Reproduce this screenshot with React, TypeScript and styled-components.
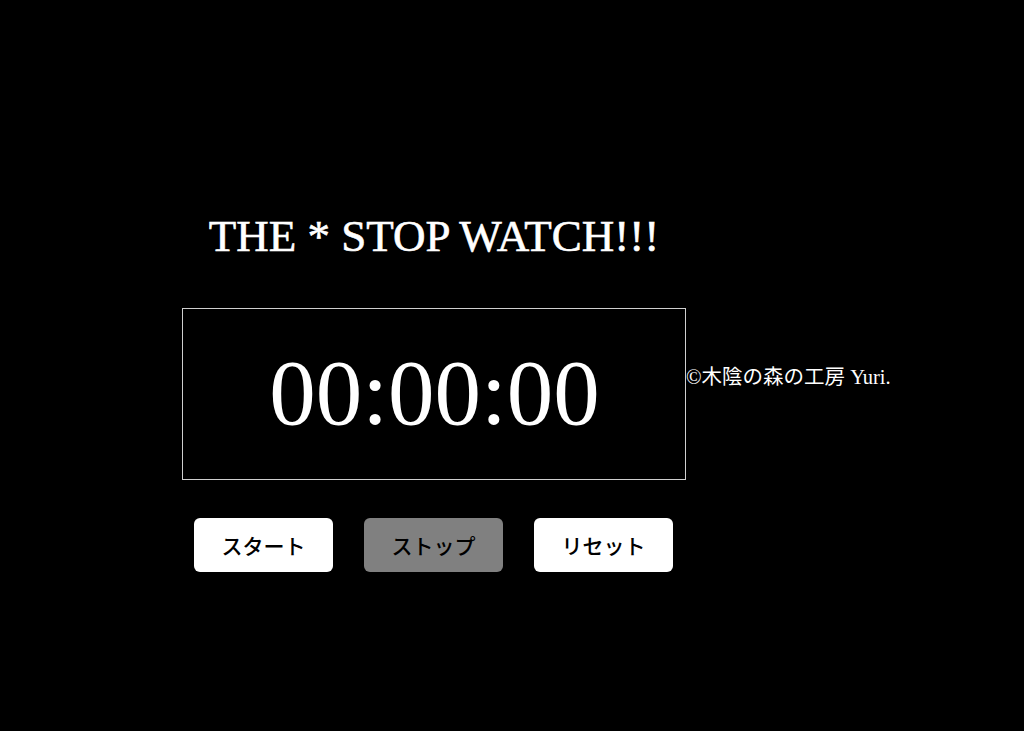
import React, { useEffect, useRef, useState } from 'react'
import styled, { createGlobalStyle } from 'styled-components'

const GlobalStyle = createGlobalStyle`
  html, body {
    margin: 0;
    padding: 0;
    background: #000;
    color: #fff;
    font-family: "Liberation Serif", "Noto Sans CJK JP", serif;
  }
`

const pad = (n: number) => String(n).padStart(2, '0')

const format = (cs: number) => {
  const min = Math.floor(cs / 6000)
  const sec = Math.floor(cs / 100) % 60
  const centi = cs % 100
  return `${pad(min)}:${pad(sec)}:${pad(centi)}`
}

const App: React.FC = () => {
  const [elapsed, setElapsed] = useState(0)
  const [running, setRunning] = useState(false)
  const timer = useRef<number | null>(null)

  useEffect(() => {
    if (!running) return
    const started = Date.now() - elapsed * 10
    timer.current = window.setInterval(() => {
      setElapsed(Math.floor((Date.now() - started) / 10))
    }, 10)
    return () => {
      if (timer.current) window.clearInterval(timer.current)
    }
  }, [running])

  return (
    <>
      <GlobalStyle />
      <Page>
        <Column>
          <Title>THE * STOP WATCH!!!</Title>
          <DisplayRow>
            <Display>
              <Time>{format(elapsed)}</Time>
            </Display>
            <Credit>©木陰の森の工房 Yuri.</Credit>
          </DisplayRow>
          <Controls>
            <Button disabled={running} onClick={() => setRunning(true)}>
              スタート
            </Button>
            <Button disabled={!running} onClick={() => setRunning(false)}>
              ストップ
            </Button>
            <Button disabled={running} onClick={() => setElapsed(0)}>
              リセット
            </Button>
          </Controls>
        </Column>
      </Page>
    </>
  )
}

export default App

const Page = styled.div`
  min-height: 731px;
  padding: 211px 0 0 182px;
  box-sizing: border-box;
`

const Column = styled.div`
  display: flex;
  flex-direction: column;
  width: 504px;
`

const Title = styled.h1`
  margin: 0 0 47px;
  font-size: 45px;
  line-height: 50px;
  font-weight: 400;
  -webkit-text-stroke: 0.6px #fff;
  text-align: center;
  white-space: nowrap;
`

const DisplayRow = styled.div`
  display: flex;
  align-items: flex-start;
  width: 504px;
`

const Display = styled.div`
  flex: 0 0 504px;
  height: 172px;
  border: 1px solid #cfcfcf;
  box-sizing: border-box;
  display: flex;
  align-items: center;
  justify-content: center;
`

const Time = styled.span`
  font-size: 93px;
  line-height: 1;
  padding-bottom: 4px;
  padding-left: 1px;
`

const Credit = styled.span`
  margin-top: 55px;
  font-size: 20.5px;
  line-height: 28px;
  white-space: nowrap;
`

const Controls = styled.div`
  display: flex;
  justify-content: center;
  gap: 31px;
  margin-top: 38px;
  padding-right: 1px;
`

const Button = styled.button`
  width: 139px;
  height: 54px;
  border: none;
  border-radius: 6px;
  background: #fff;
  color: #000;
  font-family: "Noto Sans CJK JP", sans-serif;
  font-size: 21px;
  font-weight: 500;
  cursor: pointer;
  padding: 0;

  &:disabled {
    background: #808080;
    color: #000;
    cursor: default;
  }
`
